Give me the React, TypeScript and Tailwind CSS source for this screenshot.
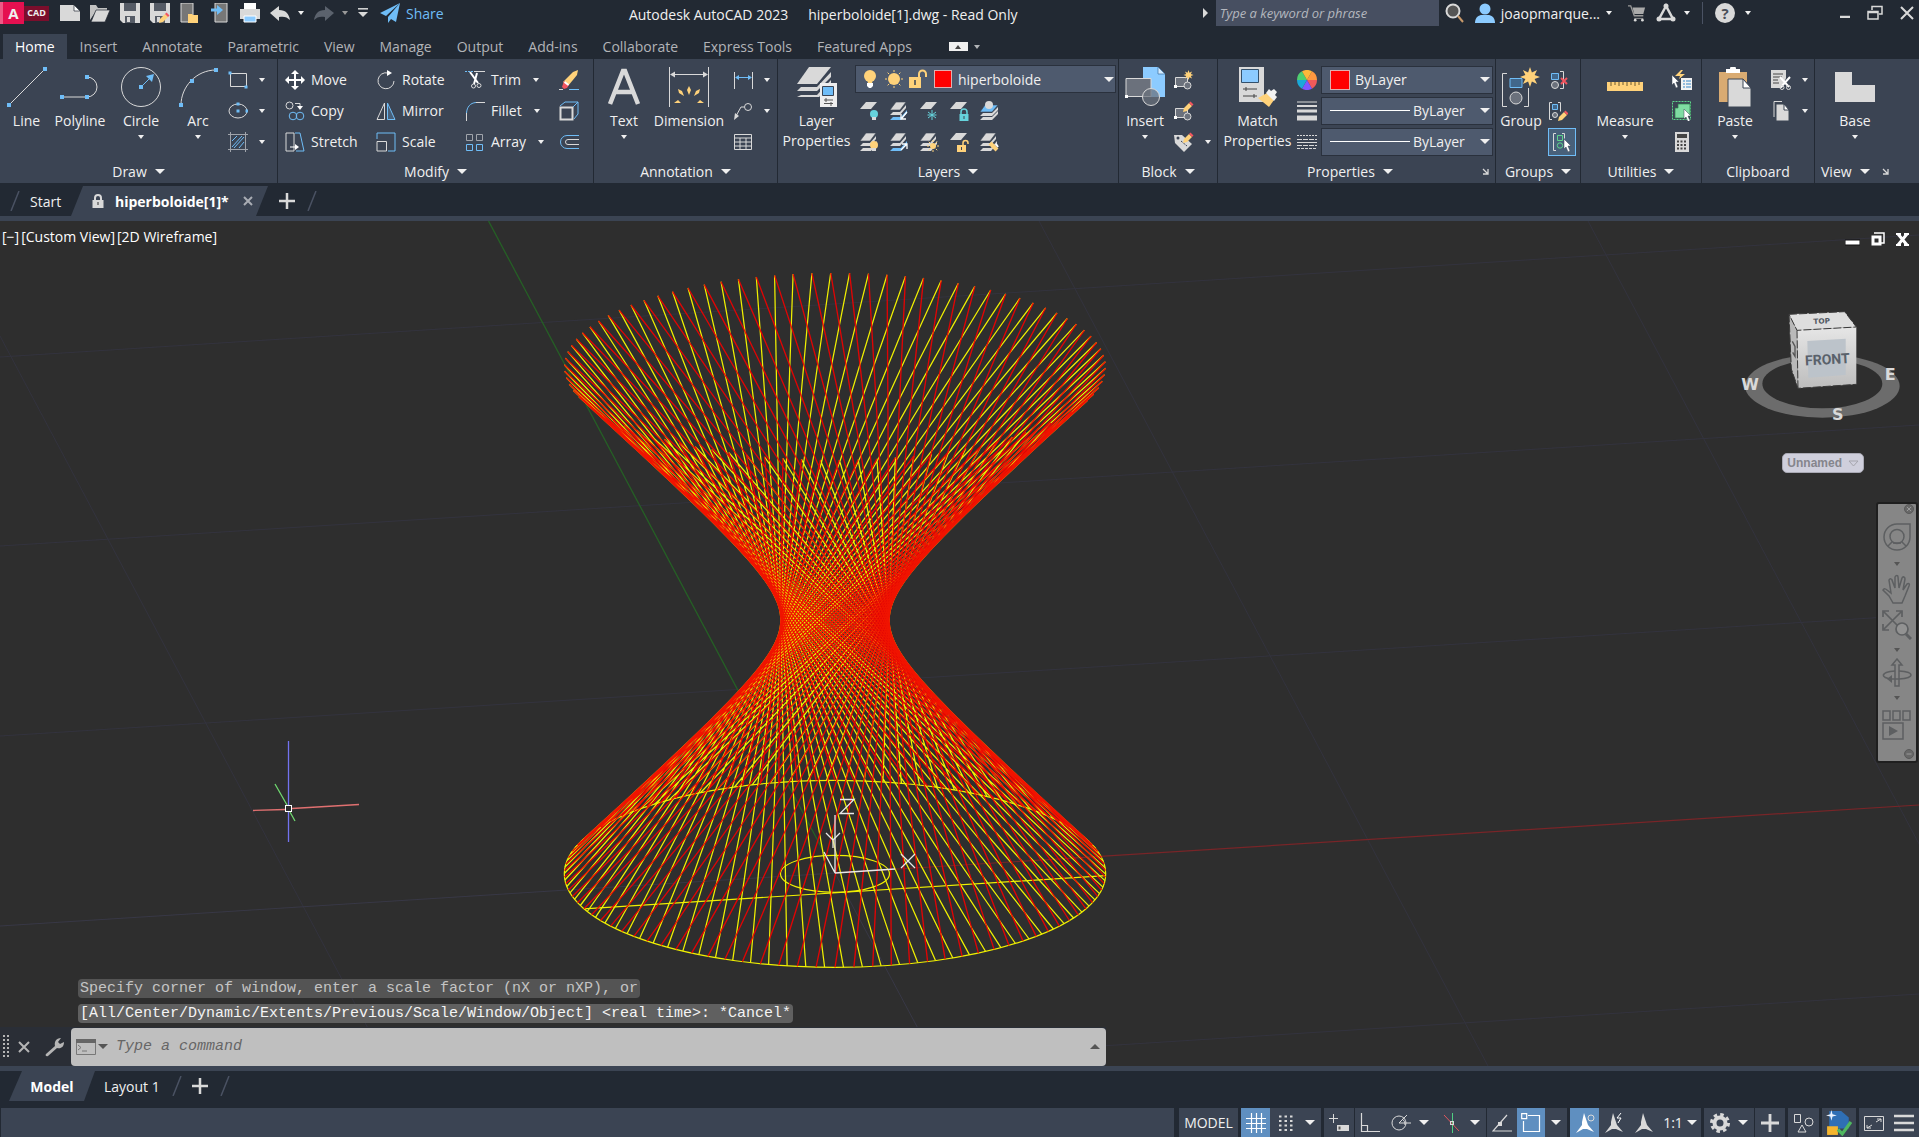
import type { ReactNode } from "react";
import clsx from "clsx";

const LIGHT = "#d9d9d9";
const BLUE = "#6fbdf7";
const YELLOW = "#ffd27a";
const CYAN = "#66d3dc";

function Icon({
  size = 20,
  box = 20,
  children,
}: {
  size?: number;
  box?: number;
  children: ReactNode;
}) {
  return (
    <svg
      width={size}
      height={size}
      viewBox={`0 0 ${box} ${box}`}
      fill="none"
      stroke={LIGHT}
      className="shrink-0"
      aria-hidden="true"
    >
      {children}
    </svg>
  );
}

function Caret({ big = false, up = false }: { big?: boolean; up?: boolean }) {
  return (
    <svg
      width={big ? 10 : 6}
      height={big ? 5 : 4}
      viewBox="0 0 10 5"
      preserveAspectRatio="none"
      className={clsx("shrink-0 pointer-events-none", up && "rotate-180")}
      fill="currentColor"
      aria-hidden="true"
    >
      <path d="M0 0h10L5 5z" />
    </svg>
  );
}

/* ---------- small shared glyph parts ---------- */

const Dot = ({ x, y, s = 4 }: { x: number; y: number; s?: number }) => (
  <rect x={x - s / 2} y={y - s / 2} width={s} height={s} fill={BLUE} stroke="none" />
);

const Sheet = () => <path d="M7 1h11l-6 7H1z" fill={LIGHT} stroke="none" />;

const Stack = ({ blue = false }: { blue?: boolean }) => (
  <>
    <path d="M1 19l3-3h8l6-7v3l-6 7z" fill={blue ? BLUE : LIGHT} stroke="none" />
    <path d="M1 14l3-3h7l6-7v3l-6 7z" fill={LIGHT} stroke="none" />
    <path d="M7 1h10l-6 8H1z" fill={LIGHT} stroke="#3b4453" strokeWidth=".6" />
  </>
);

const Bulb = ({ color }: { color: string }) => (
  <>
    <circle cx="15" cy="13" r="4" fill={color} stroke="none" />
    <path d="M13 16h4v3h-4z" fill={LIGHT} stroke="none" />
  </>
);

const Pencil = ({ x = 0, y = 0 }: { x?: number; y?: number }) => (
  <g transform={`translate(${x} ${y})`} stroke="none">
    <path d="M1 7l5-5 3 3-5 5-4 1z" fill={YELLOW} />
    <path d="M6 2l1.500-1.500 3 3L9 5z" fill="#f2555f" />
  </g>
);

const Cursor = ({ x = 0, y = 0 }: { x?: number; y?: number }) => (
  <path
    transform={`translate(${x} ${y})`}
    d="M0 0l7 7H4l2 5-2 1-2-5-2 2z"
    fill="#fff"
    stroke="#3b4453"
    strokeWidth=".5"
  />
);

const Star = ({ cx, cy, r }: { cx: number; cy: number; r: number }) => {
  const points = Array.from({ length: 16 }, (_, i) => {
    const d = i % 2 ? r * 0.5 : r;
    const a = (i * Math.PI) / 8;
    return `${cx + d * Math.sin(a)},${cy - d * Math.cos(a)}`;
  }).join(" ");
  return <polygon points={points} fill={YELLOW} stroke="none" />;
};

const Sun = ({ cx, cy, r }: { cx: number; cy: number; r: number }) => (
  <g stroke={YELLOW}>
    <circle cx={cx} cy={cy} r={r} fill={YELLOW} stroke="none" />
    {Array.from({ length: 8 }, (_, i) => {
      const a = (i * Math.PI) / 4;
      return (
        <line
          key={i}
          x1={cx + (r + 1) * Math.cos(a)}
          y1={cy + (r + 1) * Math.sin(a)}
          x2={cx + (r + 3) * Math.cos(a)}
          y2={cy + (r + 3) * Math.sin(a)}
        />
      );
    })}
  </g>
);

/* ---------- ribbon building blocks ---------- */

function Panel({
  title,
  className,
  children,
  caret = true,
  launcher = false,
}: {
  title: string;
  className: string;
  children: ReactNode;
  caret?: boolean;
  launcher?: boolean;
}) {
  return (
    <section
      aria-label={title}
      className={clsx("flex shrink-0 flex-col border-r border-[#222933]", className)}
    >
      <div className="flex h-[100px] items-start">{children}</div>
      <div className="flex h-6 items-center">
        <button className="flex flex-1 items-center justify-center gap-2">
          {title}
          {caret && <Caret big />}
        </button>
        {launcher && (
          <button aria-label={`${title} settings`} className="pr-1.5">
            <svg width="7" height="7" viewBox="0 0 7 7" fill="none" stroke={LIGHT}>
              <path d="M1 1l5 5M6 1v5H1" strokeWidth="1.300" />
            </svg>
          </button>
        )}
      </div>
    </section>
  );
}

function BigButton({
  label,
  className,
  caret = false,
  children,
}: {
  label: string;
  className: string;
  caret?: boolean;
  children: ReactNode;
}) {
  return (
    <button
      className={clsx("flex shrink-0 flex-col items-center pt-2 leading-5", className)}
    >
      <Icon size={40} box={40}>
        {children}
      </Icon>
      <span className="mt-1">{label}</span>
      {caret && (
        <span className="mt-1">
          <Caret />
        </span>
      )}
    </button>
  );
}

function Small({
  label,
  text,
  caret = false,
  active = false,
  className,
  children,
}: {
  label: string;
  text?: boolean;
  caret?: boolean;
  active?: boolean;
  className?: string;
  children: ReactNode;
}) {
  return (
    <button
      aria-label={label}
      className={clsx(
        "flex items-center",
        text ? "gap-1.5" : "gap-2.5",
        active && "border border-[#6fbdf7] bg-[#48607a] p-[3px]",
        className
      )}
    >
      <Icon>{children}</Icon>
      {text && <span>{label}</span>}
      {caret && (
        <span className={text ? "ml-1.5" : "ml-px"}>
          <Caret />
        </span>
      )}
    </button>
  );
}

function Column({ className, children }: { className?: string; children: ReactNode }) {
  return (
    <div
      className={clsx(
        "grid auto-rows-[31px] items-center justify-items-start pt-[5px]",
        className
      )}
    >
      {children}
    </div>
  );
}

function DrawPanel() {
  return (
    <Panel title="Draw" className="w-[278px]">
      <BigButton label="Line" className="w-[53px]">
        <path d="M2 38L38 2" />
        <Dot x={2} y={38} />
        <Dot x={38} y={2} />
      </BigButton>
      <BigButton label="Polyline" className="w-[54px]">
        <path d="M1 30h26a10 10 0 0 0 0-20" />
        <Dot x={2} y={30} />
        <Dot x={27} y={30} />
        <Dot x={27} y={10} />
      </BigButton>
      <BigButton label="Circle" caret className="w-[68px]">
        <circle cx="20" cy="20" r="19.500" />
        <path d="M20 20l10-10" stroke={BLUE} />
        <path d="M33 7l-2 8-6-6z" fill={BLUE} stroke="none" />
        <Dot x={20} y={20} />
      </BigButton>
      <BigButton label="Arc" caret className="w-[46px]">
        <path d="M3 38C3 20 18 3 38 3" />
        <Dot x={3} y={38} />
        <Dot x={14} y={14} />
        <Dot x={38} y={3} />
      </BigButton>
      <Column className="pl-[7px]">
        <Small label="Rectangle" caret>
          <path d="M2.500 3.500h16v13h-16z" />
          <Dot x={2} y={3} s={3} />
          <Dot x={18} y={17} s={3} />
        </Small>
        <Small label="Ellipse" caret>
          <ellipse cx="10" cy="10" rx="9" ry="7" />
          <Dot x={10} y={10} s={3} />
          <Dot x={10} y={3} s={3} />
          <Dot x={19} y={10} s={3} />
        </Small>
        <Small label="Hatch" caret>
          <path d="M0 2.500h20M0 17.500h20M2.500 0v20M17.500 0v20" stroke="#a0a4ab" />
          <path d="M4 9l5-5M4 15L14 4M6 16L16 5M11 16l5-6" stroke={BLUE} />
        </Small>
      </Column>
    </Panel>
  );
}

function ModifyPanel() {
  return (
    <Panel title="Modify" className="w-[316px]">
      <Column className="w-full grid-cols-[91px_89px_94px_1fr] pl-[7px]">
        <Small label="Move" text>
          <path d="M10 3v14M3 10h14" stroke="#fff" strokeWidth="2" />
          <path
            d="M10 0l4 4H6zM10 20l4-4H6zM0 10l4-4v8zM20 10l-4-4v8z"
            fill="#fff"
            stroke="none"
          />
        </Small>
        <Small label="Rotate" text>
          <path d="M12 3A8 8 0 1 0 18 11" />
          <path d="M11 0l5 3-5 3z" fill="#fff" stroke="none" />
        </Small>
        <Small label="Trim" text caret>
          <path d="M0 1.500h8" stroke={BLUE} strokeDasharray="2 1" />
          <path d="M9 1.500h11" />
          <path d="M5 2l8 11M12 3l-3 11" strokeWidth="2" stroke="#fff" />
          <circle cx="8.500" cy="16" r="2" />
          <circle cx="14" cy="15.500" r="2" />
        </Small>
        <Small label="Erase">
          <path d="M14 2l5-2-1 5-9 11-5-4z" fill={YELLOW} stroke="none" />
          <path d="M5 11l5 4-2 3-3 1-2-2z" fill="#f2555f" stroke="none" />
          <path d="M5.500 12l4 3" stroke="#fff" strokeWidth="2" />
          <path d="M0 19.500h4" />
          <path d="M10 19.500h10" stroke={BLUE} />
        </Small>
        <Small label="Copy" text>
          <circle cx="4.500" cy="4.500" r="3.500" />
          <path d="M10 2.500h5v4" />
          <path d="M12 5h6l-3 4z" fill="#fff" stroke="none" />
          <circle cx="8" cy="15" r="3.800" stroke={BLUE} />
          <circle cx="15" cy="15" r="3.800" stroke={BLUE} />
        </Small>
        <Small label="Mirror" text>
          <path d="M8.500 2v16.500H1z" />
          <path d="M11.500 2v16.500H19z" stroke={BLUE} fill="#48607a" />
        </Small>
        <Small label="Fillet" text caret>
          <path d="M1.500 20v-8" />
          <path d="M1.500 12C2 6 5 2 11 1.500" stroke={BLUE} />
          <path d="M11 1.500h9" />
        </Small>
        <Small label="Explode">
          <path d="M1.500 6.500h12v12h-12z" strokeWidth="2" />
          <path d="M1 5l5-4h13v12l-4 5M14 6l5-5" stroke={BLUE} />
        </Small>
        <Small label="Stretch" text>
          <path d="M1 1h8v18H1z" />
          <path d="M10 1h5l4 18h-8" stroke={BLUE} />
          <path d="M5 15h6" stroke="#fff" />
          <path d="M10 12l4 3-4 3z" fill="#fff" stroke="none" />
        </Small>
        <Small label="Scale" text>
          <path d="M1 7V1h18v18h-7" stroke={BLUE} />
          <path d="M1 9.500h9.500V19H1z" />
        </Small>
        <Small label="Array" text caret>
          <path d="M1.500 2.500h6v6h-6zM11.500 2.500h6v6h-6z" stroke="#a0a4ab" />
          <path d="M1.500 12.500h6v6h-6zM11.500 12.500h6v6h-6z" stroke={BLUE} />
        </Small>
        <Small label="Offset">
          <path d="M20 3.500H8a6.500 6.500 0 0 0 0 13h12" stroke={BLUE} />
          <path d="M20 7.500H9a2.500 2.500 0 0 0 0 5h11" />
        </Small>
      </Column>
    </Panel>
  );
}

function AnnotationPanel() {
  return (
    <Panel title="Annotation" className="w-[184px]">
      <BigButton label="Text" caret className="w-[60px]">
        <path d="M6 37L19 4h2l13 33M11 25h18" strokeWidth="4.500" />
      </BigButton>
      <BigButton label="Dimension" className="w-[70px]">
        <path d="M.5 0v40M39.500 0v40M2 7.500h36" />
        <path d="M1 7.500l5-3v6zM39 7.500l-5-3v6z" fill={LIGHT} stroke="none" />
        <g fill={YELLOW} stroke="none">
          <path d="M20 28l-2-5 2-4 2 4zM15 29l-5-3-1-4 4 2zM25 29l5-3 1-4-4 2zM12 36H5l4-3zM28 36h7l-4-3z" />
        </g>
      </BigButton>
      <Column className="pl-[9px]">
        <Small label="Linear" caret>
          <path d="M1.500 2v17M19.500 2v17" />
          <path d="M3 7.500h15" stroke={BLUE} />
          <path d="M2 7.500l4-2.500v5zM19 7.500l-4-2.500v5z" fill={BLUE} stroke="none" />
        </Small>
        <Small label="Leader" caret>
          <circle cx="15" cy="6" r="3.500" />
          <path d="M11 6H8L3 15" />
          <path d="M1 19l1-7 4 3z" fill={LIGHT} stroke="none" />
        </Small>
        <Small label="Table">
          <path d="M1.500 2.500h17v15h-17zM1 6h18M1 10h18M1 14h18M7 6v12M13 6v12" />
        </Small>
      </Column>
    </Panel>
  );
}

const layerTools: { label: string; glyph: ReactNode }[] = [
  { label: "Off", glyph: <><Sheet /><Bulb color={CYAN} /></> },
  {
    label: "Isolate",
    glyph: <><Stack blue /><path d="M18 11l-5 6M12 13v5h5" stroke="#fff" strokeWidth="1.300" /></>,
  },
  {
    label: "Freeze",
    glyph: (
      <>
        <Sheet />
        <path d="M13 9v10M9 11l8 6M17 11l-8 6M8.500 14h9" stroke={CYAN} />
      </>
    ),
  },
  {
    label: "Lock",
    glyph: (
      <>
        <Sheet />
        <path d="M12 13v-2a3 3 0 0 1 6 0v2" stroke={CYAN} strokeWidth="1.500" />
        <path d="M10.500 13h9v7h-9z" fill={CYAN} stroke="none" />
        <path d="M15 15v3" stroke="#3b4453" />
      </>
    ),
  },
  {
    label: "Make Current",
    glyph: (
      <>
        <path d="M1 19l3-3h9l6-6v3l-6 6zM1 15l3-3h9l6-6v3l-6 6z" fill={LIGHT} stroke="none" />
        <path d="M6 4h13l-6 7H1z" fill={BLUE} stroke="#3b4453" strokeWidth=".6" />
        <circle cx="10" cy="4" r="4" fill={LIGHT} stroke="none" />
      </>
    ),
  },
  { label: "Turn All Layers On", glyph: <><Stack /><Bulb color={YELLOW} /></> },
  {
    label: "Unisolate",
    glyph: <><Stack blue /><path d="M12 18l6-6M13 12h5v5" stroke="#fff" strokeWidth="1.300" /></>,
  },
  { label: "Thaw All Layers", glyph: <><Stack /><Sun cx={14} cy={14} r={3} /></> },
  {
    label: "Unlock",
    glyph: (
      <>
        <Sheet />
        <path d="M14 13v-2a2.500 2.500 0 0 1 5 0v1" stroke={YELLOW} strokeWidth="1.500" />
        <path d="M8 13h9v7H8z" fill={YELLOW} stroke="none" />
        <path d="M12.500 15v3" stroke="#3b4453" />
      </>
    ),
  },
  {
    label: "Match Layer",
    glyph: (
      <>
        <Stack />
        <path d="M11 11l7 7" stroke={YELLOW} strokeWidth="4" />
        <path d="M17 12l2 3" stroke="#fff" strokeWidth="2" />
      </>
    ),
  },
];

function LayersPanel() {
  return (
    <Panel title="Layers" className="w-[341px]">
      <BigButton label="Layer Properties" className="w-[77px]">
        <path d="M12 0h22L20 17H0z" fill={LIGHT} stroke="none" />
        <path d="M4 20h16L34 5v5L20 24H0zM4 28h16L34 13v5L22 30H0z" fill={LIGHT} stroke="none" />
        <path d="M23 16h17v24H23z" fill="#eee" stroke="none" />
        <path d="M25.500 19.500h11v9h-11z" fill={BLUE} stroke="#3b4453" />
        <path d="M27 33h9M27 36.500h9M29 31v4M34 35v4" stroke="#555" />
      </BigButton>
      <div className="flex flex-1 flex-col pt-1.5 pr-0.5">
        <div className="flex h-7 items-center border border-[#2a313d] bg-[#4e5a6e] pl-1">
          <Icon size={20}>
            <circle cx="10" cy="7" r="6" fill={YELLOW} stroke="none" />
            <path d="M7 10h6l-1 4H8z" fill={YELLOW} stroke="none" />
            <path d="M7 14h6v3l-2 2H9l-2-2z" fill="#fff" stroke="none" />
          </Icon>
          <span className="ml-1 flex">
            <Icon size={20}>
              <Sun cx={10} cy={10} r={6} />
            </Icon>
          </span>
          <span className="ml-1 flex">
            <Icon size={20}>
              <path d="M1 8h12v11H1z" fill={YELLOW} stroke="none" />
              <path d="M11 9V5a3.500 3.500 0 0 1 7 0v3" stroke={YELLOW} strokeWidth="2" />
              <path d="M7 11v5" stroke="#3b4453" strokeWidth="1.500" />
            </Icon>
          </span>
          <span className="ml-1.5 h-[18px] w-[18px] border border-[#e0b0b0] bg-[#ff0000]" />
          <select aria-label="Layer" className="ml-1 flex-1 appearance-none bg-transparent px-0.5 outline-none">
            <option>hiperboloide</option>
          </select>
          <span className="pr-px">
            <Caret big />
          </span>
        </div>
        <div className="grid auto-rows-[31px] grid-cols-[repeat(5,30px)] items-center pl-1 pt-0.5">
          {layerTools.map((tool) => (
            <Small key={tool.label} label={tool.label}>
              {tool.glyph}
            </Small>
          ))}
        </div>
      </div>
    </Panel>
  );
}

const BlockBase = () => (
  <>
    <path d="M1.500 7.500h12v9h-12z" fill="#6b717c" />
    <circle cx="13.500" cy="15.500" r="3.500" fill="#6b717c" />
    <rect x="0" y="15" width="3" height="3" fill="#fff" stroke="none" />
  </>
);

function BlockPanel() {
  return (
    <Panel title="Block" className="w-[99px]">
      <BigButton label="Insert" caret className="w-[52px]">
        <path d="M18 0h15l7 7v23H18z" fill="#8ccbff" stroke="none" />
        <path d="M33 0v7h7z" fill="#d5ecff" stroke="#3b6f9f" strokeWidth=".7" />
        <path d="M1 11.500h25v18H1z" fill="#6b717c" />
        <circle cx="26" cy="30" r="8.500" fill="#6b717cbb" />
        <rect x="0" y="28" width="3" height="3" fill="#fff" stroke="none" />
      </BigButton>
      <Column className="pl-[3px]">
        <Small label="Create">
          <BlockBase />
          <Star cx={14.500} cy={5} r={5} />
        </Small>
        <Small label="Edit">
          <BlockBase />
          <Pencil x={9} />
        </Small>
        <Small label="Edit Attributes" caret>
          <path d="M0 3h8l10 9-8 8L1 11z" fill={LIGHT} stroke="none" />
          <circle cx="4" cy="6" r="1.500" fill="#3b4453" stroke="none" />
          <path d="M7 9l6 5" stroke="#3b4453" strokeDasharray="2 1" />
          <Pencil x={9} />
        </Small>
      </Column>
    </Panel>
  );
}

const wheel = ["#ff9840", "#f05a5a", "#7e57ff", "#19a9d9", "#4fcf70", "#ffb83a"];

function PropertiesPanel() {
  return (
    <Panel title="Properties" className="w-[278px]" launcher>
      <BigButton label="Match Properties" className="w-[79px]">
        <path d="M1 0h25v35H1z" fill={LIGHT} stroke="none" />
        <path d="M3.500 2.500h17v13h-17z" fill="#8ccbff" stroke="#33506b" />
        <path d="M5 22h14M5 29h14M8 20v4M16 27v4" stroke="#444" />
        <path d="M20 31l9-5 7 7-5 7z" fill={YELLOW} stroke="none" />
        <path d="M28 26l3-4 2 2 3-2 3 3-2 3 2 2-3 4z" fill="#f2f2f2" stroke="none" />
      </BigButton>
      <Column className="flex-1 grid-cols-[24px_1fr] pr-0.5">
        <Icon>
          {wheel.map((color, i) => {
            const a = ((i - 1) * Math.PI) / 3;
            const b = a + Math.PI / 3;
            return (
              <path
                key={color}
                d={`M10 10L${10 + 10 * Math.cos(a)} ${10 + 10 * Math.sin(a)}A10 10 0 0 1 ${
                  10 + 10 * Math.cos(b)
                } ${10 + 10 * Math.sin(b)}z`}
                fill={color}
                stroke="none"
              />
            );
          })}
        </Icon>
        <div className="flex h-7 w-full items-center border border-[#2a313d] bg-[#4e5a6e] pl-2">
          <span className="size-5 border border-[#e0b0b0] bg-[#ff0000]" />
          <select aria-label="Object color" className="ml-1 flex-1 appearance-none bg-transparent px-px outline-none">
            <option>ByLayer</option>
          </select>
          <span className="pr-0.5">
            <Caret big />
          </span>
        </div>
        <Icon>
          <path d="M0 1h20" />
          <path d="M0 5h20" strokeWidth="2" />
          <path d="M0 10h20" strokeWidth="3" />
          <path d="M0 17h20" strokeWidth="5" />
        </Icon>
        <LineSelect label="Lineweight" />
        <Icon>
          <path d="M0 3.500h20" strokeDasharray="2 1" />
          <path d="M0 7.500h20M0 13.500h20" strokeDasharray="5 1" />
          <path d="M0 10.500h20" />
          <path d="M0 16.500h20" strokeDasharray="3 1" />
        </Icon>
        <LineSelect label="Linetype" />
      </Column>
    </Panel>
  );
}

function LineSelect({ label }: { label: string }) {
  return (
    <div className="flex h-7 w-full items-center border border-[#2a313d] bg-[#4e5a6e] pl-2">
      <span className="h-px w-20 bg-white" />
      <select aria-label={label} className="ml-[3px] flex-1 appearance-none bg-transparent outline-none">
        <option>ByLayer</option>
      </select>
      <span className="pr-0.5">
        <Caret big />
      </span>
    </div>
  );
}

function GroupsPanel() {
  return (
    <Panel title="Groups" className="w-[85px]">
      <BigButton label="Group" className="w-[50px]">
        <path d="M6 6.500H1.500v33H6M23 39.500h4.500V21" />
        <path d="M9 11.500h12v9H9z" fill="#41678b" stroke={BLUE} />
        <circle cx="15" cy="31" r="6" fill="#6b717c" />
        <Star cx={29} cy={10} r={10} />
      </BigButton>
      <Column className="justify-items-center pl-0.5">
        <Small label="Ungroup">
          <path d="M3.500 3.500h7v6h-7z" fill="#41678b" stroke={BLUE} />
          <circle cx="7" cy="15" r="3.500" fill="#6b717c" />
          <path d="M12 1.500h3.500v17H12" />
          <path d="M13 8l6 6M19 8l-6 6" stroke="#f2555f" strokeWidth="2" />
        </Small>
        <Small label="Group Edit">
          <path d="M4 1.500H1.500v17H4M10 1.500h2.500v9" />
          <path d="M4.500 3.500h5v5h-5z" fill="#41678b" stroke={BLUE} />
          <circle cx="7" cy="14" r="2.500" fill="#6b717c" />
          <Pencil x={10} y={9} />
        </Small>
        <Small label="Group Selection On/Off" active>
          <path d="M4 1.500H1.500v17H4M10 1.500h2.500v5" />
          <path d="M5.500 3.500h5v5h-5z" stroke="#5fd48b" />
          <circle cx="8" cy="13.500" r="2.700" stroke="#5fd48b" />
          <Cursor x={12} y={7} />
        </Small>
      </Column>
    </Panel>
  );
}

function UtilitiesPanel() {
  return (
    <Panel title="Utilities" className="w-[121px]">
      <BigButton label="Measure" caret className="w-[88px]">
        <path d="M2 15h36v9H2z" fill={YELLOW} stroke="none" />
        <path d="M6 15v4M10 15v3M14 15v4M18 15v3M22 15v4M26 15v3M30 15v4M34 15v3" stroke="#6d5a30" />
      </BigButton>
      <Column className="pl-[3px]">
        <Small label="Quick Select">
          <path d="M9 0L3 6h5l-1 3 6-5H8l3-4z" fill={YELLOW} stroke="none" />
          <path d="M9 8h11v12H9z" fill="#f2f2f2" stroke="none" />
          <path d="M11 11h2M11 14h2M11 17h2M14 11h5M14 14h5M14 17h5" stroke="#3787c8" />
          <Cursor y={5} />
        </Small>
        <Small label="Select All">
          <path d="M.5.5h18v18H.5z" stroke="#5fd48b" strokeDasharray="2 1" />
          <path d="M3 7h3V3h12v12h-4v2H3z" fill="#7fdca2" stroke="#2f7d4c" strokeWidth=".7" />
          <Cursor x={12} y={8} />
        </Small>
        <Small label="Quick Calculator">
          <path d="M3 0h14v20H3z" fill={LIGHT} stroke="none" />
          <path d="M5 2h10v4H5z" fill="#444" stroke="none" />
          <path d="M5 9.500h10M5 13h10M5 16.500h10" stroke="#444" strokeWidth="2" strokeDasharray="2 1.500" />
        </Small>
      </Column>
    </Panel>
  );
}

function ClipboardPanel() {
  return (
    <Panel title="Clipboard" className="w-[113px]" caret={false}>
      <BigButton label="Paste" caret className="w-[66px]">
        <path d="M4 5h28v30H4z" fill="#d9ab72" stroke="none" />
        <path d="M11 2h4a3 3 0 0 1 6 0h4v4H11z" fill="#fff" stroke="none" />
        <path d="M13 12h15l8 9v19H13z" fill={LIGHT} stroke="#3b4453" />
        <path d="M28 12v9h8z" fill="#fff" stroke="#3b4453" />
      </BigButton>
      <Column className="pl-[3px]">
        <Small label="Cut" caret>
          <path d="M0 0h15v8l-4 10H0z" fill={LIGHT} stroke="none" />
          <path d="M2 4h10M2 7h9M2 10h5M2 13h6" stroke="#444" />
          <path d="M9 7l9 10M19 7l-9 10" stroke="#fff" strokeWidth="2" />
          <circle cx="11" cy="17.500" r="2" />
          <circle cx="17.500" cy="17.500" r="2" />
        </Small>
        <Small label="Copy Clip" caret>
          <path d="M3 16V.5h8" />
          <path d="M5 3h8l5 6v11H5z" fill={LIGHT} stroke="#3b4453" />
          <path d="M13 3v6h5z" fill="#fff" stroke="#3b4453" />
        </Small>
      </Column>
    </Panel>
  );
}

function Ribbon() {
  return (
    <div className="flex h-[124px] overflow-hidden bg-[#3b4453] text-[14px] text-[#f0f0f0]">
      <DrawPanel />
      <ModifyPanel />
      <AnnotationPanel />
      <LayersPanel />
      <BlockPanel />
      <PropertiesPanel />
      <GroupsPanel />
      <UtilitiesPanel />
      <ClipboardPanel />
      <section aria-label="View" className="flex flex-1 flex-col">
        <div className="h-[100px] pl-3.5">
          <BigButton label="Base" caret className="w-[52px]">
            <path d="M0 5h17v13h23v17H0z" fill={LIGHT} stroke="none" />
          </BigButton>
        </div>
        <div className="flex h-6 items-center gap-3 pl-1.5">
          <button className="flex items-center gap-2">
            View <Caret big />
          </button>
          <button aria-label="View settings">
            <svg width="7" height="7" viewBox="0 0 7 7" fill="none" stroke={LIGHT}>
              <path d="M1 1l5 5M6 1v5H1" strokeWidth="1.300" />
            </svg>
          </button>
        </div>
      </section>
    </div>
  );
}

/* ---------- title bar ---------- */

const Disk = () => (
  <>
    <path d="M0 0h20v20H3l-3-3z" fill={LIGHT} stroke="none" />
    <path d="M4 0h12v8H4z" fill="#555b66" stroke="none" />
    <path d="M5 13h10v7H5z" fill="#555b66" stroke="none" />
    <path d="M7 14h3v5H7z" fill={LIGHT} stroke="none" />
  </>
);

const quickAccess: { label: string; glyph: ReactNode }[] = [
  {
    label: "New",
    glyph: (
      <>
        <path d="M0 2h14l6 6v10H0z" fill={LIGHT} stroke="none" />
        <path d="M14 2v6h6z" fill="#fff" stroke="#222933" strokeWidth=".7" />
      </>
    ),
  },
  {
    label: "Open",
    glyph: (
      <>
        <path d="M0 17V2h6l2 3h9v3H6z" fill="#c2c2c2" stroke="none" />
        <path d="M6 7h14l-5 12H1z" fill={LIGHT} stroke="#222933" strokeWidth=".7" />
      </>
    ),
  },
  { label: "Save", glyph: <Disk /> },
  { label: "Save As", glyph: <><Disk /><Pencil x={9} y={9} /></> },
  {
    label: "Open from mobile",
    glyph: (
      <>
        <path d="M1 0h12v19H1z" fill="#777" stroke={LIGHT} />
        <path d="M8 11h4l1 1h5v8H8z" fill={YELLOW} stroke="none" />
      </>
    ),
  },
  {
    label: "Save to mobile",
    glyph: (
      <>
        <path d="M5 0h12v19H5z" fill="#777" stroke={LIGHT} />
        <path d="M1 7h7" stroke={BLUE} strokeWidth="3" />
        <path d="M7 2l6 5-6 5z" fill={BLUE} stroke="none" />
      </>
    ),
  },
  {
    label: "Print",
    glyph: (
      <>
        <path d="M4 0h12v6H4z" fill="#fff" stroke="none" />
        <path d="M0 6h20v10H0z" fill={LIGHT} stroke="none" />
        <path d="M4 13h12v6H4z" fill="#8ccbff" stroke="#fff" />
      </>
    ),
  },
];

function TitleBar() {
  return (
    <header className="flex h-[34px] items-start text-[14px] text-[#f0f0f0]">
      <div className="flex h-[26px] items-center">
        <button aria-label="Application menu" className="flex items-center">
          <span className="flex h-[22px] w-6 items-center justify-center border-l-[3px] border-[#ee5a86] bg-[#e51050] text-[15px] font-bold">
            A
          </span>
          <span className="flex h-[15px] w-[25px] items-center justify-center bg-[#7b0e2c] text-[9px] font-bold">
            CAD
          </span>
        </button>
        <div className="ml-[11px] flex items-center gap-2.5">
          {quickAccess.map((q) => (
            <button key={q.label} aria-label={q.label}>
              <Icon>{q.glyph}</Icon>
            </button>
          ))}
          <button aria-label="Undo" className="flex items-center gap-2">
            <Icon>
              <path d="M0 10l9-7v4c7 0 10 4 11 10-3-3-6-4-11-3v4z" fill={LIGHT} stroke="none" />
            </Icon>
            <Caret />
          </button>
          <button aria-label="Redo" className="flex items-center gap-2 text-[#999]">
            <Icon>
              <path d="M20 10l-9-7v4C4 7 1 11 0 17c3-3 6-4 11-3v4z" fill="#5b626d" stroke="none" />
            </Icon>
            <Caret />
          </button>
          <button aria-label="Customize toolbar">
            <Icon size={10} box={10}>
              <path d="M0 .8h10" strokeWidth="1.500" />
              <path d="M0 4h10L5 9z" fill={LIGHT} stroke="none" />
            </Icon>
          </button>
          <button className="ml-0.5 flex items-center gap-1.5 text-[#6fbdf7]">
            <Icon>
              <path d="M20 0L0 10l6 3zM20 0L8 14v6l3-4 5 3z" fill={BLUE} stroke="none" />
            </Icon>
            Share
          </button>
        </div>
      </div>
      <h1 className="flex h-7 flex-1 items-center justify-center gap-5">
        <span>Autodesk AutoCAD 2023</span>
        <span>hiperboloide[1].dwg - Read Only</span>
      </h1>
      <div className="flex h-[26px] items-center">
        <button aria-label="Hide search">
          <svg width="5" height="10" viewBox="0 0 5 10" fill={LIGHT}>
            <path d="M0 0l5 5-5 5z" />
          </svg>
        </button>
        <input
          aria-label="Search help"
          placeholder="Type a keyword or phrase"
          className="ml-2 h-full w-[223px] bg-[#474f61] px-1 text-[13px] italic outline-none placeholder:text-[#b4b7be]"
        />
        <button aria-label="Search" className="ml-1.5">
          <Icon>
            <circle cx="8" cy="8" r="6.500" fill="#555" strokeWidth="2" />
            <path d="M13 13l5 6" stroke="#c99a6b" strokeWidth="2" />
          </Icon>
        </button>
        <button className="ml-2.5 flex items-center gap-1.5">
          <Icon>
            <circle cx="10" cy="6" r="5.500" fill="#8ccbff" stroke="none" />
            <path d="M0 20c0-6 4-8 7-8h6c3 0 7 2 7 8z" fill="#8ccbff" stroke="none" />
          </Icon>
          joaopmarque...
          <Caret />
        </button>
        <button aria-label="App store" className="ml-4">
          <Icon size={18}>
            <path d="M0 2h3l4 11h10" stroke="#999" strokeWidth="1.500" />
            <path d="M5 4h14l-2 7H7z" fill="#aaa" stroke="none" />
            <path d="M7 16h10" stroke="#999" />
            <circle cx="8" cy="18" r="1.500" fill={LIGHT} stroke="none" />
            <circle cx="16" cy="18" r="1.500" fill={LIGHT} stroke="none" />
          </Icon>
        </button>
        <button aria-label="Autodesk account" className="ml-2.5 flex items-center gap-2">
          <Icon>
            <path d="M10 3L3 16h14z" strokeWidth="2.500" />
            <circle cx="10" cy="3" r="2.500" fill={LIGHT} stroke="none" />
            <circle cx="3" cy="16" r="2.500" fill={LIGHT} stroke="none" />
            <circle cx="17" cy="16" r="2.500" fill={LIGHT} stroke="none" />
          </Icon>
          <Caret />
        </button>
        <span className="ml-3 h-[22px] w-px bg-[#4a5263]" />
        <button aria-label="Help" className="ml-3 flex items-center gap-2.5">
          <span className="flex size-5 items-center justify-center rounded-full bg-[#d9d9d9] text-[15px] font-bold text-[#4a4f58]">
            ?
          </span>
          <Caret />
        </button>
        <div className="ml-[89px] flex items-center gap-[17px] pr-[5px]">
          <button aria-label="Minimize">
            <Icon size={10} box={10}>
              <path d="M0 9h10" strokeWidth="2.500" />
            </Icon>
          </button>
          <button aria-label="Restore">
            <Icon size={16} box={16}>
              <path d="M5 5V1.500h10V9h-3" strokeWidth="1.500" />
              <path d="M1 6.500h10V14H1zM1 7.500h10" strokeWidth="1.500" />
            </Icon>
          </button>
          <button aria-label="Close">
            <Icon size={14} box={14}>
              <path d="M1 1l12 12M13 1L1 13" strokeWidth="2" />
            </Icon>
          </button>
        </div>
      </div>
    </header>
  );
}

const ribbonTabs = [
  "Home",
  "Insert",
  "Annotate",
  "Parametric",
  "View",
  "Manage",
  "Output",
  "Add-ins",
  "Collaborate",
  "Express Tools",
  "Featured Apps",
];

function RibbonTabs() {
  return (
    <nav className="flex h-[25px] items-stretch gap-px pl-[3px] text-[14px] text-[#b2b4b8]">
      {ribbonTabs.map((tab) => (
        <button
          key={tab}
          className={clsx("px-3", tab === "Home" && "bg-[#3b4453] text-white")}
        >
          {tab}
        </button>
      ))}
      <button aria-label="Minimize ribbon" className="ml-6 flex items-center gap-1.5">
        <span className="flex h-[9px] w-[19px] items-center justify-center bg-[#f0f0f0] text-[#444]">
          <Caret up />
        </span>
        <Caret />
      </button>
    </nav>
  );
}

const Slash = () => (
  <svg width="10" height="20" viewBox="0 0 10 20" stroke="#4a5263" className="shrink-0">
    <path d="M9 0L1 20" strokeWidth="1.500" />
  </svg>
);

const Plus = ({ size = 16 }: { size?: number }) => (
  <Icon size={size} box={16}>
    <path d="M8 0v16M0 8h16" strokeWidth="2.500" />
  </Icon>
);

function FileTabs() {
  return (
    <div className="flex h-[33px] items-end text-[14px] text-[#f0f0f0]">
      <div className="flex h-[30px] items-center">
        <span className="ml-2.5 flex">
          <Slash />
        </span>
        <button className="ml-2.5 w-[41px] text-left">Start</button>
        <div className="flex h-[30px] w-[197px] items-center bg-[#3b4453] pl-5 font-bold text-white [clip-path:polygon(12px_0,100%_0,185px_100%,0_100%)]">
          <Icon size={14} box={14}>
            <path d="M4 6V4a3 3 0 0 1 6 0v2" strokeWidth="2" />
            <path d="M1.500 6h11v8h-11z" fill={LIGHT} stroke="none" />
            <path d="M7 8v3" stroke="#666" strokeWidth="1.500" />
          </Icon>
          <button className="ml-2.5 w-[118px] text-left">hiperboloide[1]*</button>
          <button aria-label="Close tab" className="ml-2.5">
            <Icon size={10} box={10}>
              <path d="M1 1l8 8M9 1L1 9" stroke="#a9adb4" strokeWidth="2" />
            </Icon>
          </button>
        </div>
        <button aria-label="New tab" className="ml-[11px]">
          <Plus />
        </button>
        <span className="ml-3 flex">
          <Slash />
        </span>
      </div>
    </div>
  );
}

/* ---------- drawing area ---------- */

const CX = 835;
const RX = 270.7;
const RY = 93.5;
const BASE_Y = 873.8;
const TOP_Y = 366.5;
const TWIST = 156.9;
const RULINGS = 90;

function onRim(deg: number, y: number) {
  const a = (deg * Math.PI) / 180;
  return [CX + RX * Math.cos(a), y + RY * Math.sin(a)];
}

function rulingPath(twist: number) {
  let d = "";
  for (let i = 0; i < RULINGS; i++) {
    const t = 1.1 + (i * 360) / RULINGS;
    const [x1, y1] = onRim(t, TOP_Y);
    const [x2, y2] = onRim(t + twist, BASE_Y);
    d += `M${x1.toFixed(1)} ${y1.toFixed(1)}L${x2.toFixed(1)} ${y2.toFixed(1)}`;
  }
  return d;
}

function Drawing() {
  const [ax, ay] = onRim(1.1, BASE_Y);
  const [bx, by] = onRim(158, BASE_Y);
  return (
    <svg
      className="absolute inset-0 h-full w-full"
      viewBox="0 221 1919 845"
      preserveAspectRatio="xMidYMid slice"
      fill="none"
      role="img"
      aria-label="Hyperboloid wireframe"
    >
      <g stroke="#33333e">
        <path d="M0 357L1919 235M0 546L1919 425M0 736L1919 615M0 1116L1919 994" />
        <path d="M0 336L388 1066M1039 221L1488 1066M1588 221L2037 1066" />
        <path d="M0 926L835 873L938 1066" stroke="#383846" />
      </g>
      <path d="M488.500 221L835 873" stroke="#256025" strokeWidth="1.300" />
      <path d="M835 873L1919 805" stroke="#782528" strokeWidth="1.200" />

      <path d={rulingPath(-TWIST)} stroke="#f0f000" strokeWidth="1.250" />
      <g stroke="#f0f000" strokeWidth="1.200">
        <ellipse cx={CX} cy={BASE_Y} rx={RX} ry={RY} />
        <ellipse cx={CX} cy={BASE_Y} rx="54.500" ry="18.500" />
        <path d={`M${ax} ${ay}L${bx} ${by}`} />
      </g>
      <path d={rulingPath(TWIST)} stroke="#f00000" strokeWidth="1.350" strokeOpacity=".92" />

      {/* UCS icon */}
      <g stroke="#e8e8e8" strokeWidth="1.300">
        <path d="M835 873V815M835 873l60-4M835 873l-11-21" />
        <path d="M840 799.500h14l-14 14h14" />
        <path d="M826 833l7 7 7-7M833 840v8" />
        <path d="M901 854l14 14M915 854l-14 14" />
      </g>

      {/* crosshair */}
      <path d="M288.500 741v64M288.500 812v30" stroke="#7373f0" strokeWidth="1.300" />
      <path d="M253 810.500l32-1M292 808.500l67-4" stroke="#e07070" strokeWidth="1.300" />
      <path d="M275 784l12 21M290 812l5 9" stroke="#6fd86f" strokeWidth="1.300" />
      <rect x="285.500" y="805.500" width="6" height="6" stroke="#fff" />
    </svg>
  );
}

function ViewCube() {
  return (
    <svg
      width="170"
      height="120"
      viewBox="100 85 510 360"
      className="absolute right-4 top-[87px]"
      aria-label="View cube"
      role="img"
      fontWeight="bold"
    >
      <defs>
        <linearGradient id="cubeFront" x1="0" y1="0" x2="0" y2="1">
          <stop offset="0" stopColor="#e6e6e6" />
          <stop offset="1" stopColor="#bdbdbd" />
        </linearGradient>
      </defs>
      <ellipse cx="368" cy="319" rx="232" ry="95" fill="#6c6c6c" />
      <ellipse cx="368" cy="312" rx="180" ry="74" fill="#2e2e2e" />
      <path d="M268 104L435 96L470 142L292 152z" fill="#dedede" />
      <path d="M268 104L292 152L295 326L275 268z" fill="#b9b9b9" />
      <path d="M292 152L470 142L470 314L295 326z" fill="url(#cubeFront)" />
      <path d="M323 184l115-7v109l-112 8z" fill="#bcc3ca" />
      <path
        d="M268 104L435 96L470 142L292 152zM292 152L295 326M268 104l7 164 20 58 175-12"
        fill="none"
        stroke="#3a3a3a"
        strokeWidth="3"
        strokeDasharray="24 6"
      />
      <path d="M278 185l8 15v30l-7-12" fill="none" stroke="#555" strokeWidth="4" />
      <text
        x="383"
        y="254"
        fontFamily="Roboto, sans-serif"
        fontSize="42"
        textAnchor="middle"
        fill="#59616b"
        transform="rotate(-3 383 240)"
      >
        FRONT
      </text>
      <g fontFamily="DejaVu Sans, sans-serif" textAnchor="middle">
        <text x="366" y="132" fontSize="22" fill="#50565e" transform="rotate(-3 366 124)">
          TOP
        </text>
        <g fill="#d9d9d9" fontSize="48">
          <text x="151" y="332">W</text>
          <text x="414" y="421">S</text>
          <text x="572" y="300">E</text>
        </g>
      </g>
    </svg>
  );
}

function NavBar() {
  const dim = "#5d5f61";
  return (
    <div className="absolute right-px top-[281px] flex h-[261px] w-[42px] flex-col items-center rounded-[3px] border-2 border-[#1f1f1f] bg-[#868686] text-[#555]">
      <button aria-label="Close navigation bar" className="mr-0.5 self-end">
        <Icon size={10} box={10}>
          <circle cx="5" cy="5" r="4.500" fill="#686868" stroke="#5a5a5a" />
          <path d="M3 3l4 4M7 3L3 7" stroke="#999" />
        </Icon>
      </button>
      <button aria-label="Steering wheel" className="mt-2 flex flex-col items-center gap-2.5">
        <Icon size={30} box={30}>
          <path d="M15 2h13v13a13 13 0 1 1-13-13z" stroke={dim} strokeWidth="1.500" />
          <circle cx="15" cy="14.500" r="7" stroke={dim} strokeWidth="1.500" />
          <path d="M10 20l-4 4M20 20l4 4M11 21h8" stroke={dim} strokeWidth="1.500" />
        </Icon>
        <Caret />
      </button>
      <button aria-label="Pan" className="mt-2">
        <Icon size={30} box={30}>
          <path
            d="M11 29L7 22 1 16c1-2 3-1 4 0l4 3L7 6c1-2 3-1 3 0l3 8V3c1-2 3-2 3 0l1 11 3-10c1-2 3-1 3 1l-2 11 4-6c2-1 3 0 2 2l-4 10-3 7z"
            stroke={dim}
            strokeWidth="1.500"
          />
        </Icon>
      </button>
      <button aria-label="Zoom extents" className="mt-1.5 flex flex-col items-center gap-2">
        <Icon size={30} box={30}>
          <path d="M2 2l17 17M19 2L2 19M1 7V1h6M14 1h6v6M1 14v6h6" stroke={dim} strokeWidth="1.700" />
          <circle cx="20" cy="19" r="6" fill="#929292" stroke={dim} strokeWidth="1.700" />
          <path d="M24 24l5 5" stroke={dim} strokeWidth="3" />
        </Icon>
        <Caret />
      </button>
      <button aria-label="Orbit" className="mt-1.5 flex flex-col items-center gap-2">
        <Icon size={30} box={30}>
          <path d="M13 28V7h-3l5-6 5 6h-3v21z" stroke={dim} strokeWidth="1.500" />
          <path d="M13 13C-2 14-2 20 10 21M17 13c16 1 16 7 0 8h-8" stroke={dim} strokeWidth="1.700" />
          <path d="M5 21l5-4v8z" fill={dim} stroke="none" />
        </Icon>
        <Caret />
      </button>
      <button aria-label="Show motion" className="mt-2.5">
        <Icon size={30} box={30}>
          <path d="M1 1h7v9H1zM11 1h7v9h-7zM21 1h7v9h-7zM1 13h20v16H1z" stroke={dim} strokeWidth="1.500" />
          <path d="M7 16l9 5-9 5z" fill={dim} stroke="none" />
        </Icon>
      </button>
      <button aria-label="Navigation bar options" className="mb-0.5 mr-0.5 mt-auto self-end">
        <Icon size={10} box={10}>
          <circle cx="5" cy="5" r="4.500" fill="#686868" stroke="#5a5a5a" />
          <path d="M2.500 5h5" stroke="#999" />
        </Icon>
      </button>
    </div>
  );
}

function CommandLine() {
  return (
    <div className="absolute bottom-0 left-0 w-[1106px] max-w-full font-['Liberation_Mono',monospace] text-[15px]">
      <div className="flex flex-col items-start gap-1.5 pb-1 pl-[78px]">
        <p className="h-[19px] rounded-sm bg-[#545454] px-0.5 leading-5 text-[#c4c4c4]">
          Specify corner of window, enter a scale factor (nX or nXP), or
        </p>
        <p className="h-[19px] rounded-sm bg-[#606060] px-0.5 leading-5 text-[#f4f4f4]">
          [All/Center/Dynamic/Extents/Previous/Scale/Window/Object] &lt;real time&gt;: *Cancel*
        </p>
      </div>
      <div className="flex h-[39px] items-center bg-[#2a2e36]">
        <svg width="8" height="24" viewBox="0 0 8 24" className="ml-[3px]" fill="#b5b5b5">
          {[0, 4, 8, 12, 16, 20].map((y) => (
            <path key={y} d={`M0 ${y}h2v2h-2zM4 ${y}h2v2h-2z`} />
          ))}
        </svg>
        <button aria-label="Close command line" className="ml-[7px]">
          <Icon size={12} box={12}>
            <path d="M1 1l10 10M11 1L1 11" stroke="#b5b5b5" strokeWidth="2" />
          </Icon>
        </button>
        <button aria-label="Customize" className="ml-[15px]">
          <Icon>
            <path
              d="M1 17L10 9C9 5 11 1 16 1l-3 4 2 2 4-2c0 5-3 7-7 6l-9 8c-2 1-3-1-2-2z"
              fill="#b5b5b5"
              stroke="none"
            />
          </Icon>
        </button>
        <label className="ml-1.5 flex h-[38px] flex-1 items-center rounded-sm bg-[#bfbfbf] text-[#555]">
          <svg width="20" height="16" viewBox="0 0 20 16" fill="none" stroke="#777" className="ml-[5px]">
            <path d="M.5.5h19v15H.5z" />
            <path d="M0 0h20v4H0z" fill="#666" stroke="none" />
            <path d="M2 6l3 2.500L2 11M6 12h5" />
          </svg>
          <span className="ml-0.5 flex">
            <Caret big />
          </span>
          <input
            aria-label="Command"
            placeholder="Type a command"
            className="ml-2 flex-1 bg-transparent pt-0.5 italic outline-none placeholder:text-[#666]"
          />
          <span className="pr-1.5">
            <Caret big up />
          </span>
        </label>
      </div>
    </div>
  );
}

function Canvas() {
  return (
    <main className="relative box-content min-h-[600px] flex-1 overflow-hidden border-y-[5px] border-[#3b4453] bg-[#2e2e2e]">
      <Drawing />
      <div className="relative flex items-start justify-between pl-0.5 pr-[9px] pt-1.5 text-[14px] text-white">
        <div className="flex gap-0.5 leading-5">
          <button>[−]</button>
          <button>[Custom View]</button>
          <button>[2D Wireframe]</button>
        </div>
        <div className="mt-[5px] flex gap-2.5">
          <button aria-label="Minimize viewport">
            <Icon size={15} box={15}>
              <path d="M0 8h15v5H0z" fill="#fff" stroke="#111" />
            </Icon>
          </button>
          <button aria-label="Maximize viewport">
            <Icon size={15} box={15}>
              <path d="M4 1h10v10h-3" stroke="#fff" strokeWidth="1.500" />
              <path d="M3 5h7v7H3z" stroke="#fff" strokeWidth="3" />
            </Icon>
          </button>
          <button aria-label="Close viewport">
            <Icon size={15} box={15}>
              <path d="M3 2l9 11M12 2L3 13" stroke="#fff" strokeWidth="3" />
              <path d="M1 2h5M9 2h5M1 13h5M9 13h5" stroke="#fff" strokeWidth="2" />
            </Icon>
          </button>
        </div>
      </div>
      <ViewCube />
      <button className="absolute right-[55px] top-[232px] flex h-5 items-center gap-1.5 rounded-[5px] border border-[#a9a9b4] bg-[#cfcfdc] px-1 font-['Liberation_Sans',sans-serif] text-[12px] font-bold text-[#85858c]">
        Unnamed
        <svg width="11" height="7" viewBox="0 0 11 7" fill="none" stroke="#a5a5ad">
          <path d="M1 1h9L5.500 6z" />
        </svg>
      </button>
      <NavBar />
      <CommandLine />
    </main>
  );
}

function LayoutTabs() {
  return (
    <div className="flex h-[37px] items-start pl-[9px] text-[14px] text-[#f0f0f0]">
      <div className="flex h-[30px] items-center">
        <button className="h-[30px] w-[86px] bg-[#3b4453] font-bold text-white [clip-path:polygon(13px_0,100%_0,75px_100%,0_100%)]">
          Model
        </button>
        <button className="ml-[9px]">Layout 1</button>
        <span className="ml-3 flex">
          <Slash />
        </span>
        <button aria-label="New layout" className="ml-2.5">
          <Plus />
        </button>
        <span className="ml-3 flex">
          <Slash />
        </span>
      </div>
    </div>
  );
}

/* ---------- status bar ---------- */

function Cell({
  label,
  className,
  active = false,
  caret = false,
  children,
}: {
  label: string;
  className: string;
  active?: boolean;
  caret?: boolean;
  children?: ReactNode;
}) {
  return (
    <button
      aria-label={label}
      className={clsx(
        "flex h-full shrink-0 items-center justify-center gap-2",
        active ? "bg-[#5f8fc0]" : "bg-[#3b4453]",
        className
      )}
    >
      {children}
      {caret && <Caret big />}
    </button>
  );
}

const Person = ({ extra, fill = LIGHT }: { extra?: ReactNode; fill?: string }) => (
  <Icon>
    <path d="M9 0l3 9 1 3 6 7-7-3-2 0h-2l-7 4 6-8 0-3z" fill={fill} stroke="none" />
    {extra}
  </Icon>
);

function StatusBar() {
  return (
    <footer className="flex h-[29px] items-stretch overflow-hidden pl-px text-[14px] text-[#f0f0f0]">
      <div className="mr-[5px] min-w-0 flex-1 bg-[#3b4453]" />
      <button className="mr-[3px] w-[59px] shrink-0 bg-[#3b4453]">MODEL</button>
      <Cell label="Grid" active className="w-[29px]">
        <Icon>
          <path d="M5.500 0v20M10.500 0v20M15.500 0v20M0 5.500h20M0 10.500h20M0 15.500h20" stroke="#fff" strokeWidth="1.200" />
        </Icon>
      </Cell>
      <Cell label="Snap" caret className="mr-[3px] w-[51px]">
        <Icon>
          <path d="M2 3.500h14M2 8h14M2 12.500h14M2 17h14" strokeWidth="2" strokeDasharray="2.500 3" />
        </Icon>
      </Cell>
      <Cell label="Dynamic input" className="mr-px w-[30px]">
        <Icon>
          <path d="M4.500 1v9M0 5.500h9" />
          <path d="M8 12h12v6H8z" fill={LIGHT} stroke="none" />
          <path d="M9.500 13.500h2v3h-2z" fill="#555" stroke="none" />
        </Icon>
      </Cell>
      <Cell label="Ortho" className="w-[29px]">
        <Icon>
          <path d="M1.500 0v18.500H20M1.500 12.500h6v6" strokeWidth="1.200" />
        </Icon>
      </Cell>
      <Cell label="Polar tracking" caret className="w-[51px]">
        <Icon>
          <circle cx="8" cy="10" r="7" />
          <path d="M16 2L8 10h12M11 6c2 1 3 3 3 6" />
        </Icon>
      </Cell>
      <Cell label="Isodraft" caret className="mr-px w-[51px]">
        <Icon>
          <path d="M10.500 0v20" stroke="#4fcf82" />
          <path d="M2 2l15 16" stroke="#e0555c" />
          <rect x="8.500" y="8.500" width="3" height="3" />
        </Icon>
      </Cell>
      <Cell label="Object snap tracking" className="w-[30px]">
        <Icon>
          <path d="M15 2L1 18h19" strokeWidth="1.200" />
          <path d="M6 9h4v4H6z" fill={LIGHT} stroke="none" />
        </Icon>
      </Cell>
      <Cell label="Object snap" active className="w-[28px]">
        <Icon>
          <path d="M7 2.500h11.500v16h-16V8" stroke="#fff" strokeWidth="1.200" />
          <path d="M.7.7h5v5h-5z" stroke="#fff" strokeWidth="1.200" />
        </Icon>
      </Cell>
      <Cell label="Object snap settings" caret className="mr-[3px] w-[22px]" />
      <Cell label="Annotation visibility" active className="w-[29px]">
        <Person fill="#fff" extra={<circle cx="16" cy="5" r="3" />} />
      </Cell>
      <Cell label="Autoscale" className="w-[29px]">
        <Person extra={<path d="M17 0l-4 5h4l-3 5" stroke="#fff" />} />
      </Cell>
      <Cell label="Annotation scale" className="w-[31px]">
        <Person />
      </Cell>
      <button className="mr-[3px] flex w-[42px] shrink-0 items-center justify-center gap-1 bg-[#3b4453]">
        1:1
        <Caret big />
      </button>
      <Cell label="Workspace switching" caret className="mr-px w-[50px]">
        <Icon>
          <circle cx="10" cy="10" r="5.500" strokeWidth="4" />
          <circle cx="10" cy="10" r="8.500" strokeWidth="3" strokeDasharray="3.500 3.170" />
        </Icon>
      </Cell>
      <Cell label="Annotation monitor" className="mr-[3px] w-[30px]">
        <Plus size={18} />
      </Cell>
      <Cell label="Isolate objects" className="mr-[3px] w-[31px]">
        <Icon>
          <path d="M.5 1.500h6v8h-6zM8 12l4 7H4z" />
          <circle cx="15" cy="9" r="4" />
        </Icon>
      </Cell>
      <Cell label="Hardware acceleration" className="mr-[3px] w-[34px]">
        <Icon size={26} box={24}>
          <path d="M3 1h11l7 6v10H3z" fill="#2f6fb5" stroke="none" />
          <path d="M1 15h10v8H1z" fill="#f5b52e" stroke="none" />
          <path d="M5 0l1 4 4 1-4 1-1 4-1-4-4-1 4-1z" fill="#eaf3ff" stroke="none" />
          <path d="M11 18l4 4 8-11" stroke="#4fb860" strokeWidth="3" />
        </Icon>
      </Cell>
      <Cell label="Clean screen" className="w-[30px]">
        <Icon>
          <path d="M.5 3.500h19v14H.5z" />
          <path d="M12 9l5-3M13 6h4v3M8 12l-5 3M3 12v3h4" />
        </Icon>
      </Cell>
      <Cell label="Customization" className="w-[30px]">
        <Icon>
          <path d="M0 3h20M0 10h20M0 17h20" strokeWidth="2.500" />
        </Icon>
      </Cell>
    </footer>
  );
}

export default function App() {
  return (
    <div className="flex min-h-screen flex-col overflow-hidden bg-[#222933] font-['Open_Sans','Noto_Sans',sans-serif]">
      <TitleBar />
      <RibbonTabs />
      <Ribbon />
      <FileTabs />
      <Canvas />
      <LayoutTabs />
      <StatusBar />
    </div>
  );
}
